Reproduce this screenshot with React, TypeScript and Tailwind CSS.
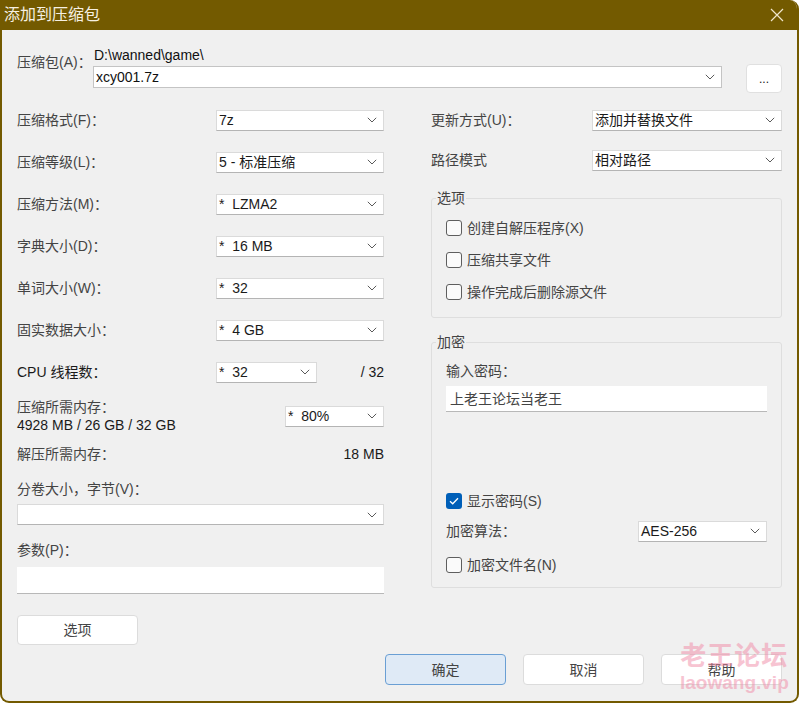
const Chevron = () => (
  <svg width="10" height="6" viewBox="0 0 10 6" className="shrink-0">
    <path d="M0.8 0.8 L5 5 L9.2 0.8" fill="none" stroke="#5a5a5a" strokeWidth="1" />
  </svg>
);

function Select({ value, className }: { value: string; className: string }) {
  return (
    <div
      className={`flex h-[21px] items-center justify-between border border-[#dadada] border-b-[#b4b4b4] bg-white pl-[2px] pr-[6px] ${className}`}
    >
      <span className="whitespace-pre text-[14px] leading-none text-[#1a1a1a]">{value}</span>
      <Chevron />
    </div>
  );
}

function Check({ label, checked }: { label: string; checked?: boolean }) {
  return (
    <div className="flex items-center gap-[5px]">
      {checked ? (
        <div className="flex h-[16px] w-[16px] items-center justify-center rounded-[3px] bg-[#005fb8]">
          <svg width="10" height="8" viewBox="0 0 10 8">
            <path d="M1 4.2 L3.7 6.8 L9 1.2" fill="none" stroke="white" strokeWidth="1.3" />
          </svg>
        </div>
      ) : (
        <div className="h-[16px] w-[16px] rounded-[3px] border border-[#5e5e5e] bg-[#fafafa]" />
      )}
      <span>{label}</span>
    </div>
  );
}

function Row({ label, value }: { label: string; value: string }) {
  return (
    <div className="flex h-[42px] items-center">
      <span className="w-[199px]">{label}</span>
      <Select value={value} className="w-[168px]" />
    </div>
  );
}

export default function App() {
  return (
    <div className="h-[703px] w-[800px] bg-white font-['Liberation_Sans','Noto_Sans_CJK_SC',sans-serif] text-[14px] leading-[18px] text-[#444]">
      <div className="relative flex h-[703px] w-[799px] flex-col overflow-hidden rounded-tr-[9px] rounded-b-[9px] border-2 border-t-0 border-[#735a00] bg-[#f0f0f0]">
        {/* title bar */}
        <div className="flex h-[30px] shrink-0 items-center justify-between bg-[#735a00] pl-[2px] pr-[13px]">
          <span className="text-[16px] text-[#f6f0e2]">添加到压缩包</span>
          <svg width="14" height="14" viewBox="0 0 14 14">
            <path d="M1 1 L13 13 M13 1 L1 13" stroke="#f0e6cc" strokeWidth="1.2" />
          </svg>
        </div>

        <div className="flex flex-1 flex-col px-[15px] pt-[16px] pb-[16px]">
          {/* archive path */}
          <div className="flex">
            <span className="w-[76px] pt-[7px]">压缩包(A)：</span>
            <div className="flex flex-1 flex-col">
              <span className="pl-[1px] text-[#111]">D:\wanned\game\</span>
              <div className="mt-[2px] flex h-[22px] items-center justify-between border border-[#c4c4c4] bg-white pl-[2px] pr-[6px]">
                <span className="text-[14px] leading-none text-[#111]">xcy001.7z</span>
                <Chevron />
              </div>
            </div>
            <div className="mt-[18px] ml-[24px] flex h-[29px] w-[36px] items-center justify-center rounded-[4px] border border-[#e0e0e0] bg-white text-[12px] text-[#222]">
              ...
            </div>
          </div>

          <div className="mt-[6px] grid grid-cols-[367px_351px] gap-x-[47px]">
            {/* left column */}
            <div className="flex flex-col">
              <Row label="压缩格式(F)：" value="7z" />
              <Row label="压缩等级(L)：" value="5 - 标准压缩" />
              <Row label="压缩方法(M)：" value="*  LZMA2" />
              <Row label="字典大小(D)：" value="*  16 MB" />
              <Row label="单词大小(W)：" value="*  32" />
              <Row label="固实数据大小：" value="*  4 GB" />
              <div className="flex h-[42px] items-center">
                <span className="w-[199px] text-[#1a1a1a]">CPU 线程数：</span>
                <Select value="*  32" className="w-[101px]" />
                <span className="flex-1 text-right text-[#1a1a1a]">/ 32</span>
              </div>
              <div className="mt-[5px] flex items-center justify-between">
                <div className="flex flex-col">
                  <span>压缩所需内存：</span>
                  <span className="text-[#1a1a1a]">4928 MB / 26 GB / 32 GB</span>
                </div>
                <Select value="*  80%" className="w-[99px]" />
              </div>
              <div className="mt-[11px] flex justify-between">
                <span>解压所需内存：</span>
                <span className="text-[#1a1a1a]">18 MB</span>
              </div>
              <span className="mt-[17px]">分卷大小，字节(V)：</span>
              <Select value="" className="mt-[6px] w-full" />
              <span className="mt-[16px]">参数(P)：</span>
              <div className="mt-[8px] h-[27px] border-b border-[#b8b8b8] bg-white" />
              <div className="mt-[21px] flex h-[30px] w-[121px] items-center justify-center rounded-[4px] border border-[#dcdcdc] bg-white">
                选项
              </div>
            </div>

            {/* right column */}
            <div className="flex flex-col">
              <div className="mt-[1px] flex h-[40px] items-center justify-between">
                <span>更新方式(U)：</span>
                <Select value="添加并替换文件" className="w-[190px]" />
              </div>
              <div className="flex h-[40px] items-center justify-between">
                <span>路径模式</span>
                <Select value="相对路径" className="w-[190px]" />
              </div>

              <fieldset className="mt-[9px] rounded-[3px] border border-[#dedede] pb-[9px] pl-[4px] pr-[14px]">
                <legend className="px-[1px]">选项</legend>
                <div className="flex flex-col pt-[5px] pl-[10px]">
                  <div className="flex h-[32px] items-center">
                    <Check label="创建自解压程序(X)" />
                  </div>
                  <div className="flex h-[32px] items-center">
                    <Check label="压缩共享文件" />
                  </div>
                  <div className="flex h-[32px] items-center">
                    <Check label="操作完成后删除源文件" />
                  </div>
                </div>
              </fieldset>

              <fieldset className="mt-[15px] rounded-[3px] border border-[#dedede] pb-[10px] pl-[4px] pr-[14px]">
                <legend className="px-[1px]">加密</legend>
                <div className="flex flex-col pt-[11px] pl-[10px]">
                  <span>输入密码：</span>
                  <div className="mt-[6px] flex h-[26px] items-center border-b border-[#b8b8b8] bg-white pl-[4px]">
                    上老王论坛当老王
                  </div>
                  <div className="mt-[77px] flex h-[24px] items-center">
                    <Check label="显示密码(S)" checked />
                  </div>
                  <div className="mt-[7px] flex h-[22px] items-center justify-between">
                    <span>加密算法：</span>
                    <Select value="AES-256" className="w-[129px]" />
                  </div>
                  <div className="mt-[11px] flex h-[24px] items-center">
                    <Check label="加密文件名(N)" />
                  </div>
                </div>
              </fieldset>
            </div>
          </div>

          {/* bottom buttons */}
          <div className="mt-auto flex justify-end gap-[17px]">
            <div className="flex h-[31px] w-[121px] items-center justify-center rounded-[4px] border border-[#6a9fd4] bg-[#dfeaf6]">
              确定
            </div>
            <div className="flex h-[31px] w-[121px] items-center justify-center rounded-[4px] border border-[#dcdcdc] bg-white">
              取消
            </div>
            <div className="flex h-[31px] w-[121px] items-center justify-center rounded-[4px] border border-[#dcdcdc] bg-white">
              帮助
            </div>
          </div>
        </div>

        {/* watermark */}
        <div className="pointer-events-none absolute left-[678px] top-[640px] flex flex-col items-center font-bold text-[#f08aa6] opacity-50">
          <span className="text-[26px] leading-[32px] tracking-[1px]">老王论坛</span>
          <span className="text-[19px] leading-[22px]">laowang.vip</span>
        </div>
      </div>
    </div>
  );
}
